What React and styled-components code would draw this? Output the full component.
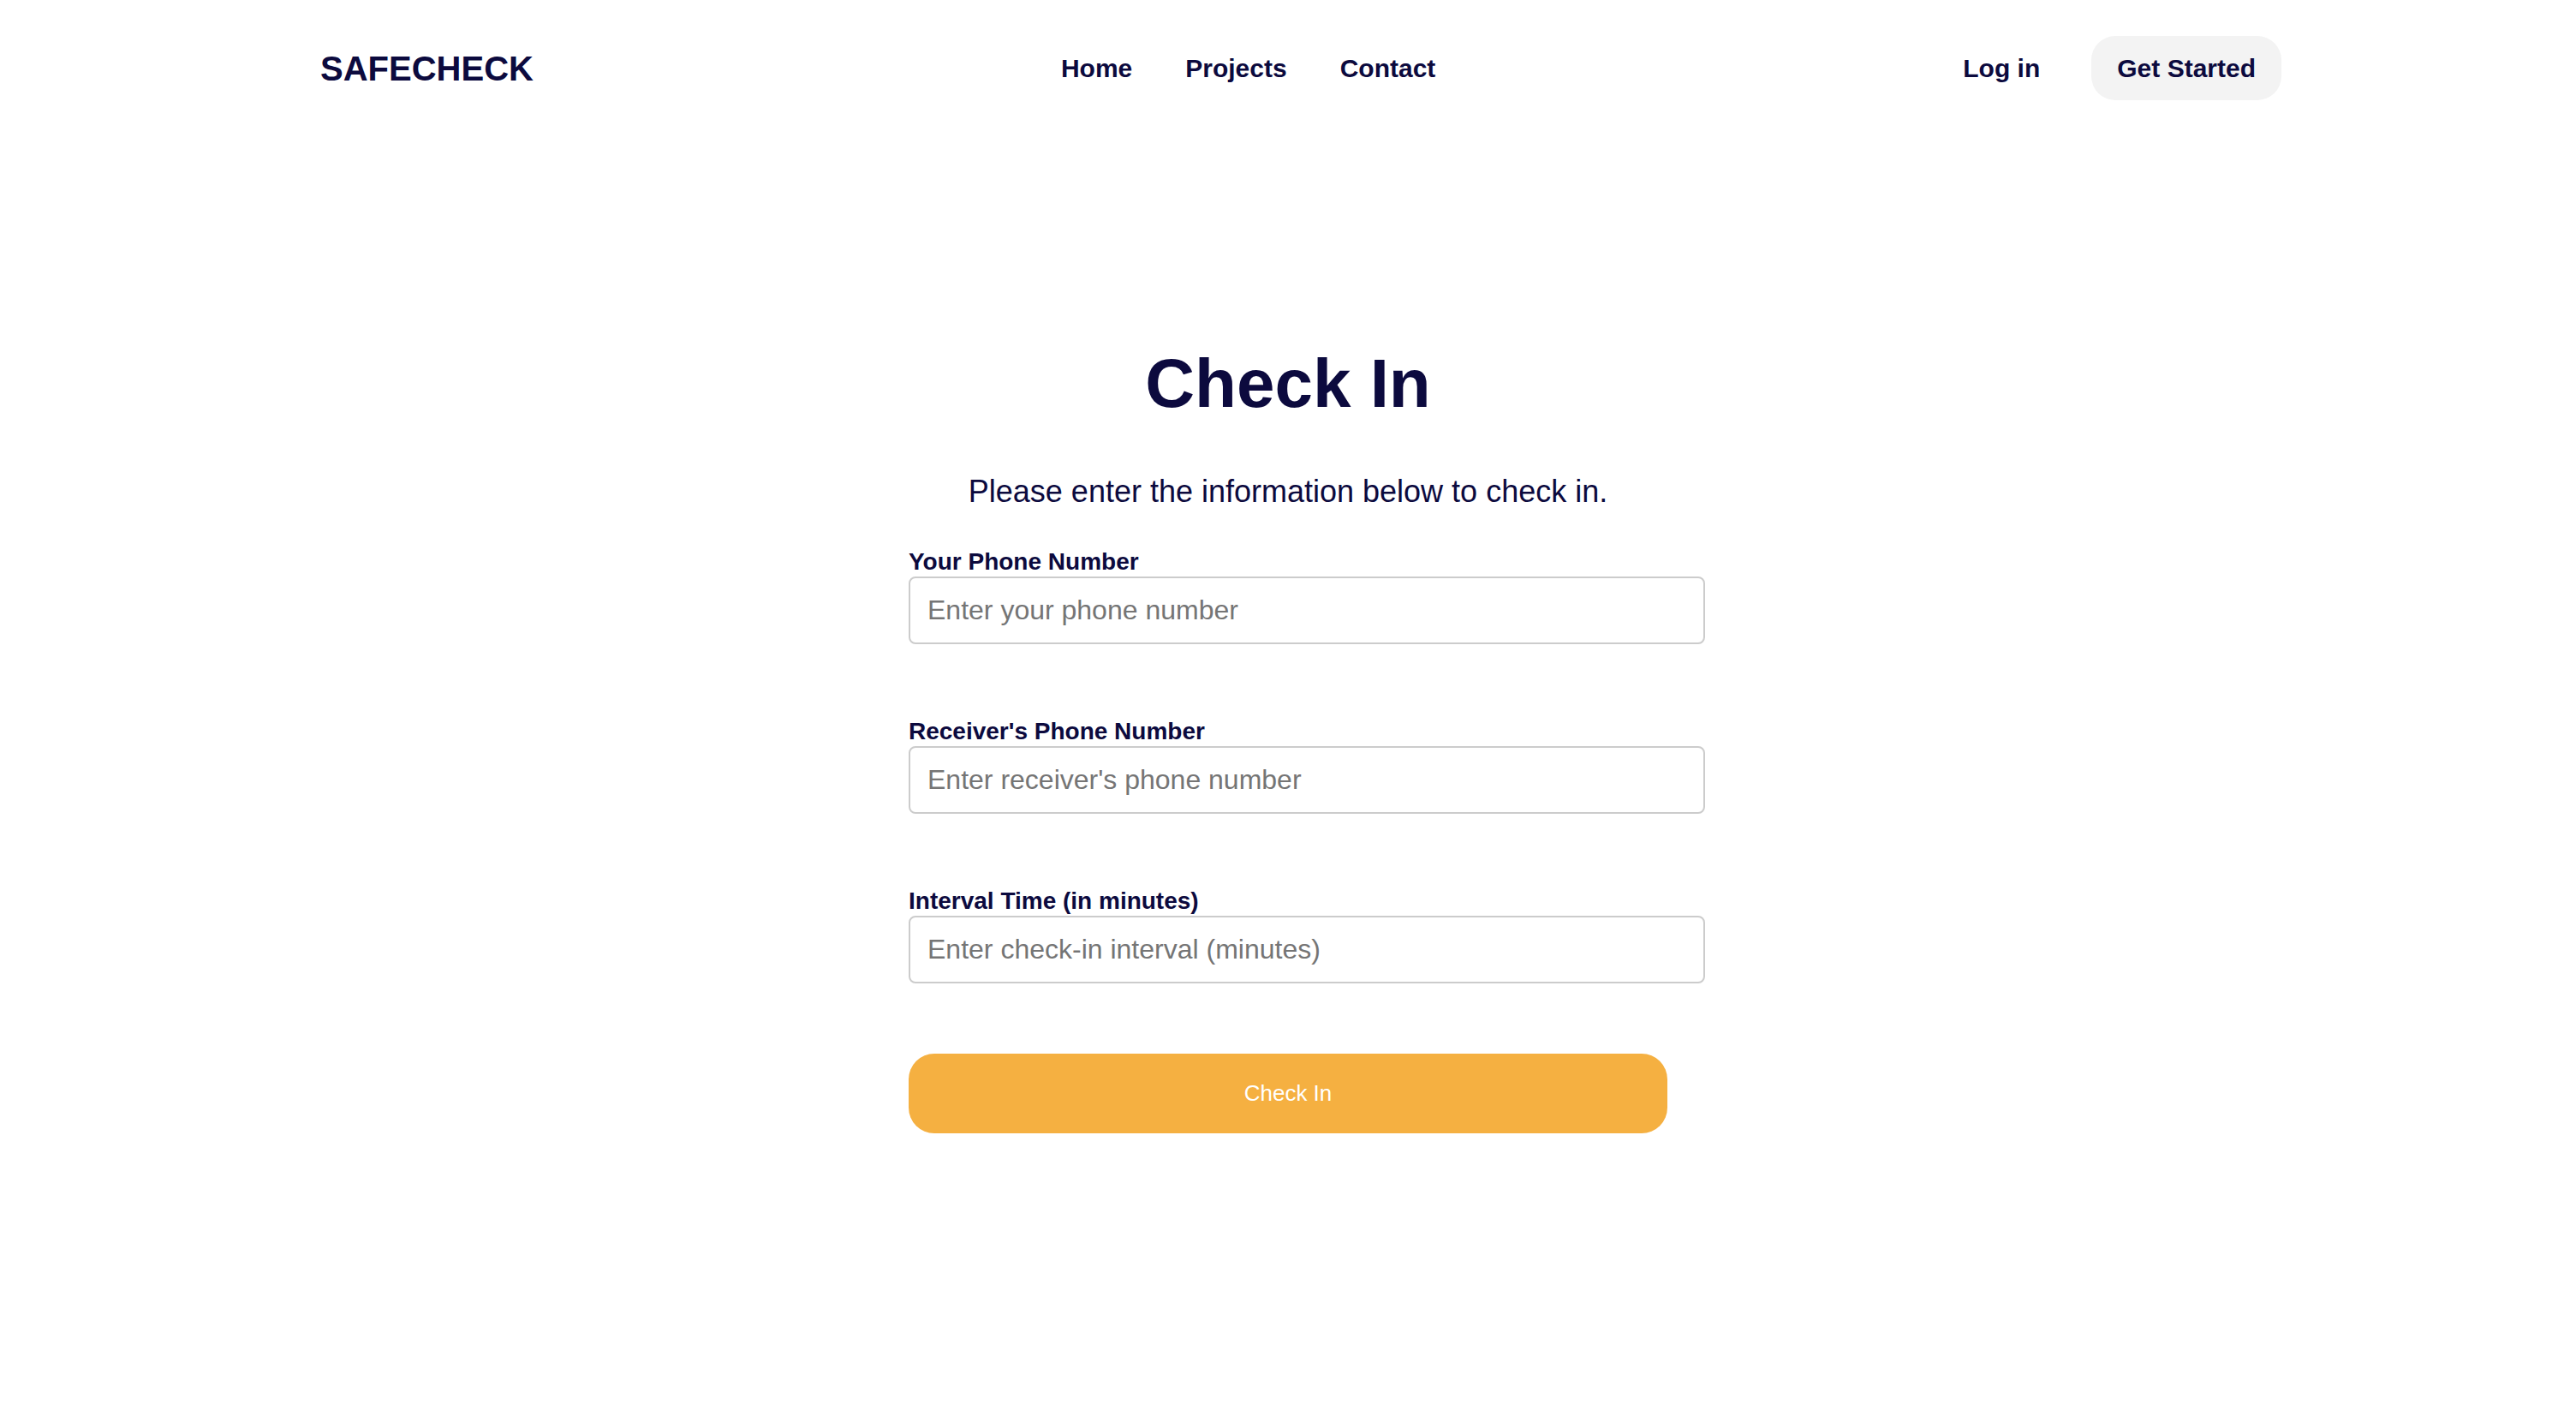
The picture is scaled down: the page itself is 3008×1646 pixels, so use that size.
import React from 'react'
import styled, { createGlobalStyle } from 'styled-components'

const GlobalStyle = createGlobalStyle`
  body {
    margin: 0;
    background: #ffffff;
    font-family: "Liberation Sans", Arial, Helvetica, sans-serif;
    color: #0c0a3e;
  }
`;

const Page = styled.div`
  min-height: 1646px;
  background: #fff;
`;

const Header = styled.header`
  display: flex;
  justify-content: space-between;
  align-items: center;
  padding: 42px 344px 0 374px;
  height: 75px;
`;

const Logo = styled.div`
  font-size: 40px;
  font-weight: 700;
  line-height: 1;
`;

const Nav = styled.nav`
  display: flex;
  gap: 62px;
`;

const NavLink = styled.a`
  font-size: 30px;
  font-weight: 700;
  line-height: 1;
  color: #0c0a3e;
  text-decoration: none;
  cursor: pointer;
`;

const Actions = styled.div`
  display: flex;
  align-items: center;
  gap: 60px;
`;

const StartButton = styled.button`
  height: 75px;
  padding: 0 30px;
  border: none;
  border-radius: 28px;
  background: #f3f3f3;
  font-family: inherit;
  font-size: 30px;
  font-weight: 700;
  color: #0c0a3e;
  cursor: pointer;
`;

const Main = styled.main`
  width: 886px;
  margin: 0 auto;
  padding-top: 291px;
  display: flex;
  flex-direction: column;
`;

const Title = styled.h1`
  margin: 0;
  font-size: 80px;
  font-weight: 700;
  line-height: 1;
  text-align: center;
`;

const Subtitle = styled.p`
  margin: 68px 0 50px;
  font-size: 36px;
  line-height: 1;
  text-align: center;
  white-space: nowrap;
`;

const Field = styled.div`
  display: flex;
  flex-direction: column;
  gap: 3px;
  margin-bottom: ${p => (p.last ? '82px' : '88px')};
`;

const Label = styled.label`
  font-size: 28px;
  font-weight: 700;
  line-height: 1;
`;

const Input = styled.input`
  box-sizing: content-box;
  width: 100%;
  height: 75px;
  padding: 0 20px;
  border: 2px solid #cccccc;
  border-radius: 8px;
  font-family: inherit;
  font-size: 32px;
  color: #0c0a3e;
  outline: none;

  &::placeholder {
    color: #757575;
  }
`;

const SubmitButton = styled.button`
  height: 93px;
  width: 100%;
  border: none;
  border-radius: 30px;
  background: #f5b041;
  color: #ffffff;
  font-family: inherit;
  font-size: 26px;
  cursor: pointer;
`;

const fields = [
  { label: 'Your Phone Number', placeholder: 'Enter your phone number' },
  { label: "Receiver's Phone Number", placeholder: "Enter receiver's phone number" },
  { label: 'Interval Time (in minutes)', placeholder: 'Enter check-in interval (minutes)' },
];

export default function App() {
  return (
    <>
      <GlobalStyle />
      <Page>
        <Header>
          <Logo>SAFECHECK</Logo>
          <Nav>
            <NavLink>Home</NavLink>
            <NavLink>Projects</NavLink>
            <NavLink>Contact</NavLink>
          </Nav>
          <Actions>
            <NavLink>Log in</NavLink>
            <StartButton>Get Started</StartButton>
          </Actions>
        </Header>

        <Main>
          <Title>Check In</Title>
          <Subtitle>Please enter the information below to check in.</Subtitle>
          {fields.map((f, i) => (
            <Field key={f.label} last={i === fields.length - 1}>
              <Label>{f.label}</Label>
              <Input placeholder={f.placeholder} />
            </Field>
          ))}
          <SubmitButton>Check In</SubmitButton>
        </Main>
      </Page>
    </>
  )
}
